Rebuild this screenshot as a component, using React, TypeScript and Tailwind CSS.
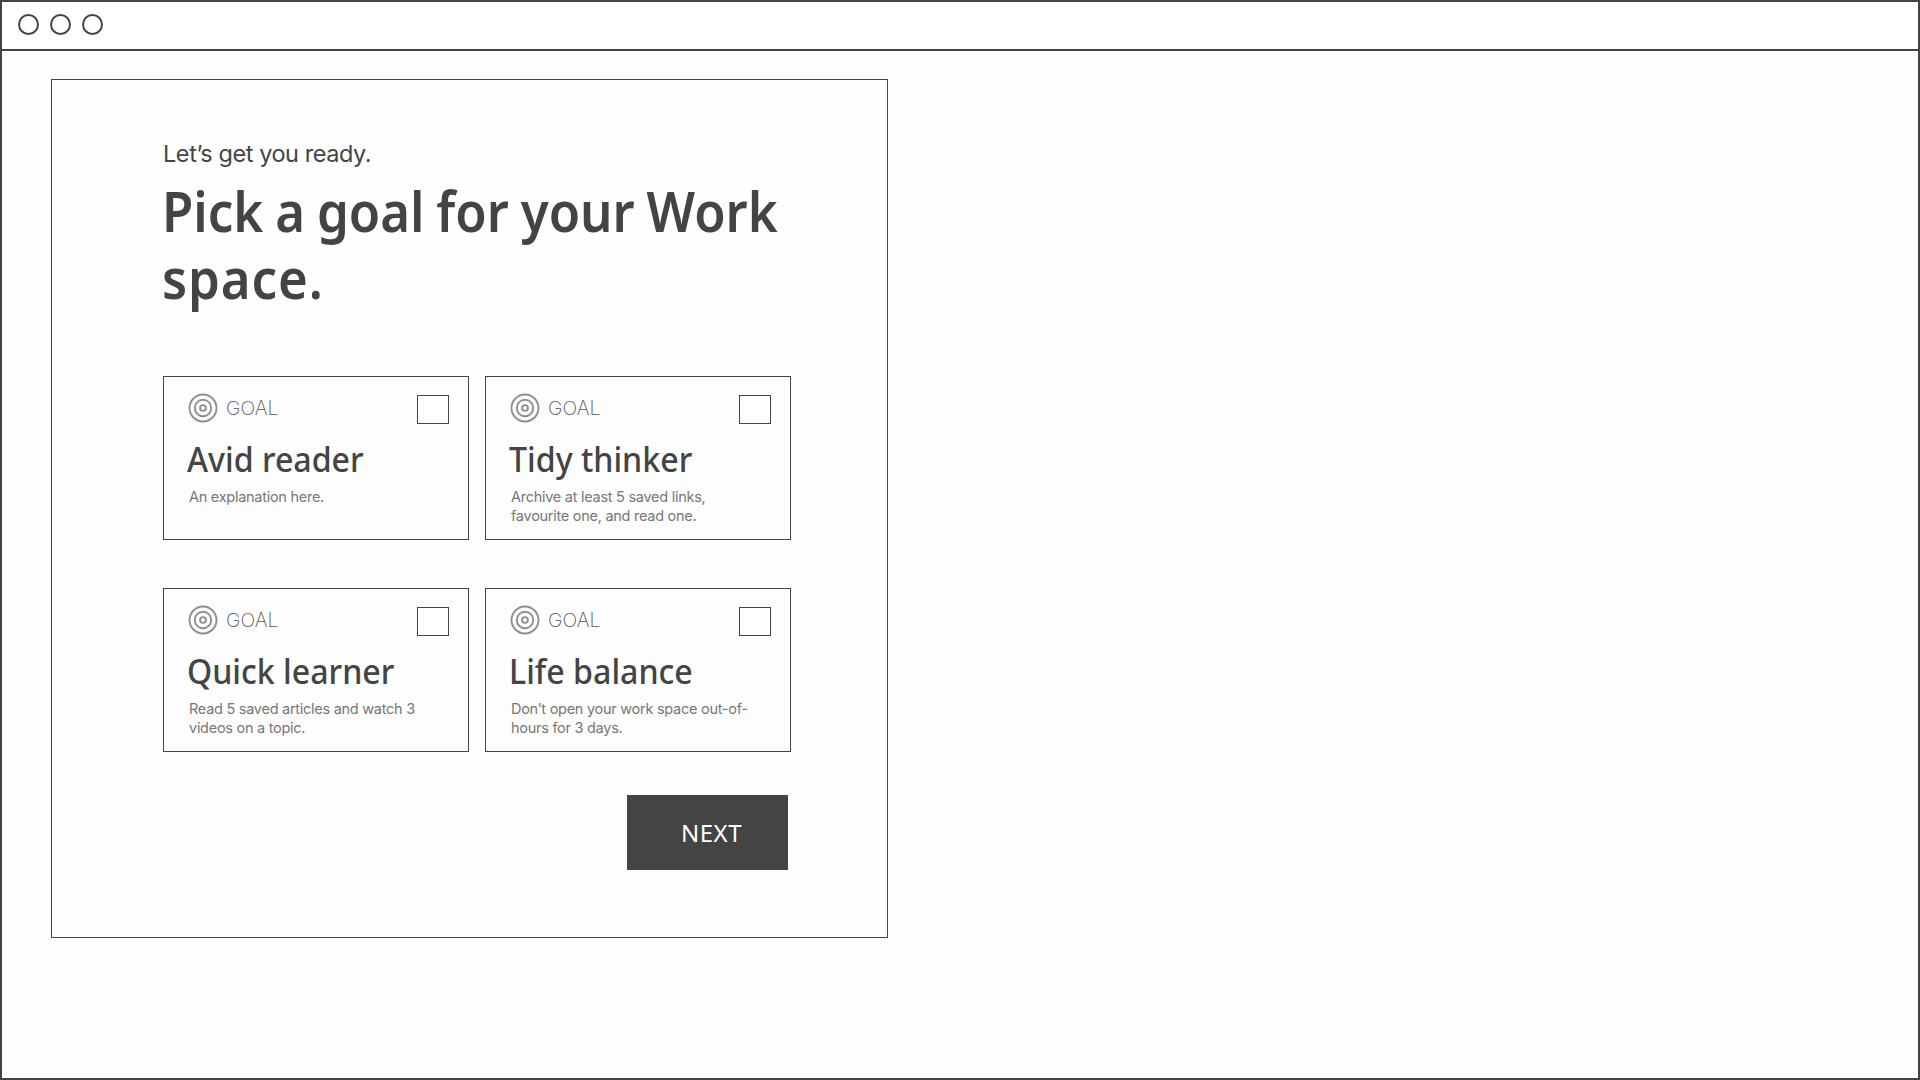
type Goal = { title: string; lines: string[] };

const goals: Goal[] = [
  { title: "Avid reader", lines: ["An explanation here."] },
  { title: "Tidy thinker", lines: ["Archive at least 5 saved links,", "favourite one, and read one."] },
  { title: "Quick learner", lines: ["Read 5 saved articles and watch 3", "videos on a topic."] },
  { title: "Life balance", lines: ["Don’t open your work space out-of-", "hours for 3 days."] },
];

function TargetIcon() {
  return (
    <svg viewBox="0 0 30 30" className="size-[30px]" fill="none" stroke="#8f8f8f" strokeWidth="1.9">
      <circle cx="15" cy="15" r="13.5" />
      <circle cx="15" cy="15" r="8.2" />
      <circle cx="15" cy="15" r="2.9" />
    </svg>
  );
}

function GoalCard({ title, lines }: Goal) {
  return (
    <article className="flex h-[164px] w-[306px] flex-col border border-[#444] bg-[#fdfdfd] pr-[19px] pl-6">
      <header className="flex h-[62px] items-start justify-between pt-[16px]">
        <div className="flex h-[30px] items-center gap-[8px]">
          <TargetIcon />
          <span className="font-['Inter',sans-serif] text-[19.5px] leading-[30px] font-extralight text-[#555]">GOAL</span>
        </div>
        <span className="mt-[2px] h-[29px] w-8 border border-[#444] bg-white" />
      </header>
      <h2 className="-ml-px h-[48px] origin-left scale-x-[0.945] font-['Noto_Sans',sans-serif] text-[34px] leading-[40px] font-medium whitespace-nowrap text-[#444]">
        {title}
      </h2>
      <p className="pl-px font-['Inter',sans-serif] text-[14.5px] leading-[19px] tracking-[-0.27px] whitespace-nowrap text-[#777]">
        {lines.map((line) => (
          <span key={line} className="block">{line}</span>
        ))}
      </p>
    </article>
  );
}

export default function App() {
  return (
    <div className="flex h-screen w-full flex-col border-2 border-[#444] bg-[#fdfdfd] text-[#444]">
      <div className="flex h-[49px] shrink-0 items-center gap-[11px] border-b-2 border-[#444] bg-white pb-[2px] pl-4">
        <span className="size-[21px] rounded-full border-2 border-[#444]" />
        <span className="size-[21px] rounded-full border-2 border-[#444]" />
        <span className="size-[21px] rounded-full border-2 border-[#444]" />
      </div>
      <main className="mt-7 ml-[49px] flex h-[859px] w-[837px] flex-col border border-[#444] bg-[#fefefe] pl-[111px]">
        <p className="mt-[60px] h-[37px] font-['Inter',sans-serif] text-[23.5px] leading-[28px] tracking-[-0.43px]">
          Let’s get you ready.
        </p>
        <h1 className="-ml-px h-[199px] origin-left scale-x-[0.91] font-['Noto_Sans',sans-serif] text-[56px] leading-[67px] font-semibold whitespace-nowrap [word-spacing:-1.5px]">
          <span className="block">Pick a goal for your Work</span>
          <span className="block tracking-[1px]">space.</span>
        </h1>
        <section className="grid w-[628px] grid-cols-2 gap-x-4 gap-y-12">
          {goals.map((goal) => (
            <GoalCard key={goal.title} {...goal} />
          ))}
        </section>
        <button className="mt-[43px] ml-[464px] h-[75px] w-[161px] bg-[#444] pl-[54px] text-left font-['Noto_Sans',sans-serif] text-2xl tracking-[0.5px] text-white">
          NEXT
        </button>
      </main>
    </div>
  );
}
